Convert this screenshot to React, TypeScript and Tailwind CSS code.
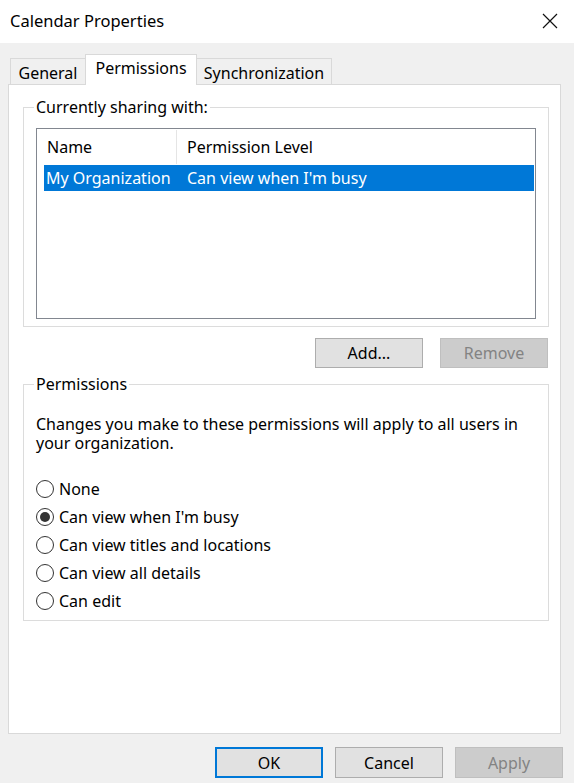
import React, { useState } from "react";

const font = { fontFamily: '"Noto Sans", "Open Sans", sans-serif' };

const levels = [
  "None",
  "Can view when I'm busy",
  "Can view titles and locations",
  "Can view all details",
  "Can edit",
];

function Radio({ checked, label, onClick }: { checked: boolean; label: string; onClick: () => void }) {
  return (
    <button type="button" onClick={onClick} className="flex items-center h-[28px] gap-[5px] text-left">
      <span className="w-[18px] h-[18px] rounded-full border border-[#333333] bg-white flex items-center justify-center">
        {checked && <span className="w-[10px] h-[10px] rounded-full bg-[#333333]" />}
      </span>
      <span>{label}</span>
    </button>
  );
}

export default function App() {
  const [level, setLevel] = useState(1);
  const [tab, setTab] = useState("Permissions");

  return (
    <div style={font} className="w-[574px] h-[783px] bg-[#f0f0f0] text-[16px] text-black flex flex-col overflow-hidden">
      {/* title bar */}
      <div className="h-[43px] bg-white flex items-center justify-between pl-[10px] pr-[16px]">
        <span className="text-[16.5px]">Calendar Properties</span>
        <svg width="16" height="16" viewBox="0 0 16 16" className="mt-[-2px]">
          <path d="M1 1 L15 15 M15 1 L1 15" stroke="#111" strokeWidth="1.2" />
        </svg>
      </div>

      {/* tabs */}
      <div className="flex items-end h-[41px] pl-[10px] relative z-10">
        <button
          type="button"
          onClick={() => setTab("General")}
          className={tab === "General" ? "w-[76px] h-[31px] bg-white border border-b-0 border-[#d9d9d9] -mb-px pb-[4px]" : "w-[76px] h-[26px] bg-[#f0f0f0] border border-b-0 border-[#d9d9d9] pt-[2px]"}
        >
          General
        </button>
        <button
          type="button"
          onClick={() => setTab("Permissions")}
          className={tab === "Permissions" ? "w-[112px] h-[31px] bg-white border border-b-0 border-[#d9d9d9] -mb-px pb-[4px] -mx-[1px]" : "w-[110px] h-[26px] bg-[#f0f0f0] border border-b-0 border-[#d9d9d9] pt-[2px]"}
        >
          Permissions
        </button>
        <button
          type="button"
          onClick={() => setTab("Synchronization")}
          className={tab === "Synchronization" ? "w-[136px] h-[31px] bg-white border border-b-0 border-[#d9d9d9] -mb-px pb-[4px]" : "w-[136px] h-[26px] bg-[#f0f0f0] border border-b-0 border-[#d9d9d9] pt-[2px]"}
        >
          Synchronization
        </button>
      </div>

      {/* tab panel */}
      <div className="mx-[8px] mr-[13px] h-[650px] bg-white border border-[#d9d9d9] pt-[12px] pl-[14px] pr-[11px]">
        <fieldset className="border border-[#dcdcdc] px-[12px] pb-[7px]">
          <legend className="px-[2px] -ml-[2px] leading-[20px]">Currently sharing with:</legend>
          <div className="mt-[11px] h-[191px] border border-[#828790] bg-white flex flex-col">
            <div className="flex h-[36px] items-stretch">
              <div className="w-[140px] pl-[10px] flex items-center border-r border-[#e5e5e5] my-[1px]">Name</div>
              <div className="pl-[10px] flex items-center">Permission Level</div>
            </div>
            <div className="flex h-[26px] items-center bg-[#0078d7] text-white ml-[7px] mr-[1px]">
              <div className="w-[133px] pl-[2px]">My Organization</div>
              <div className="pl-[10px]">Can view when I'm busy</div>
            </div>
          </div>
        </fieldset>

        <div className="flex justify-end gap-[17px] mt-[11px] pr-[1px]">
          <button type="button" className="w-[108px] h-[30px] bg-[#e1e1e1] border border-[#adadad]">
            Add...
          </button>
          <button type="button" disabled className="w-[108px] h-[30px] bg-[#cccccc] border border-[#bfbfbf] text-[#838383]">
            Remove
          </button>
        </div>

        <fieldset className="mt-[6px] border border-[#dcdcdc] px-[12px] pb-[5px]">
          <legend className="px-[2px] -ml-[2px] leading-[20px]">Permissions</legend>
          <p className="mt-[21px] leading-[19px] pr-[6px]">
            Changes you make to these permissions will apply to all users in your organization.
          </p>
          <div className="mt-[22px] flex flex-col">
            {levels.map((l, i) => (
              <Radio key={l} label={l} checked={level === i} onClick={() => setLevel(i)} />
            ))}
          </div>
        </fieldset>
      </div>

      {/* footer */}
      <div className="flex justify-end gap-[12px] pr-[11px] mt-[13px]">
        <button type="button" className="w-[108px] h-[31px] bg-[#e1e1e1] border-2 border-[#0078d7]">
          OK
        </button>
        <button type="button" className="w-[108px] h-[31px] bg-[#e1e1e1] border border-[#adadad]">
          Cancel
        </button>
        <button type="button" disabled className="w-[108px] h-[31px] bg-[#cccccc] border border-[#bfbfbf] text-[#838383]">
          Apply
        </button>
      </div>
    </div>
  );
}
